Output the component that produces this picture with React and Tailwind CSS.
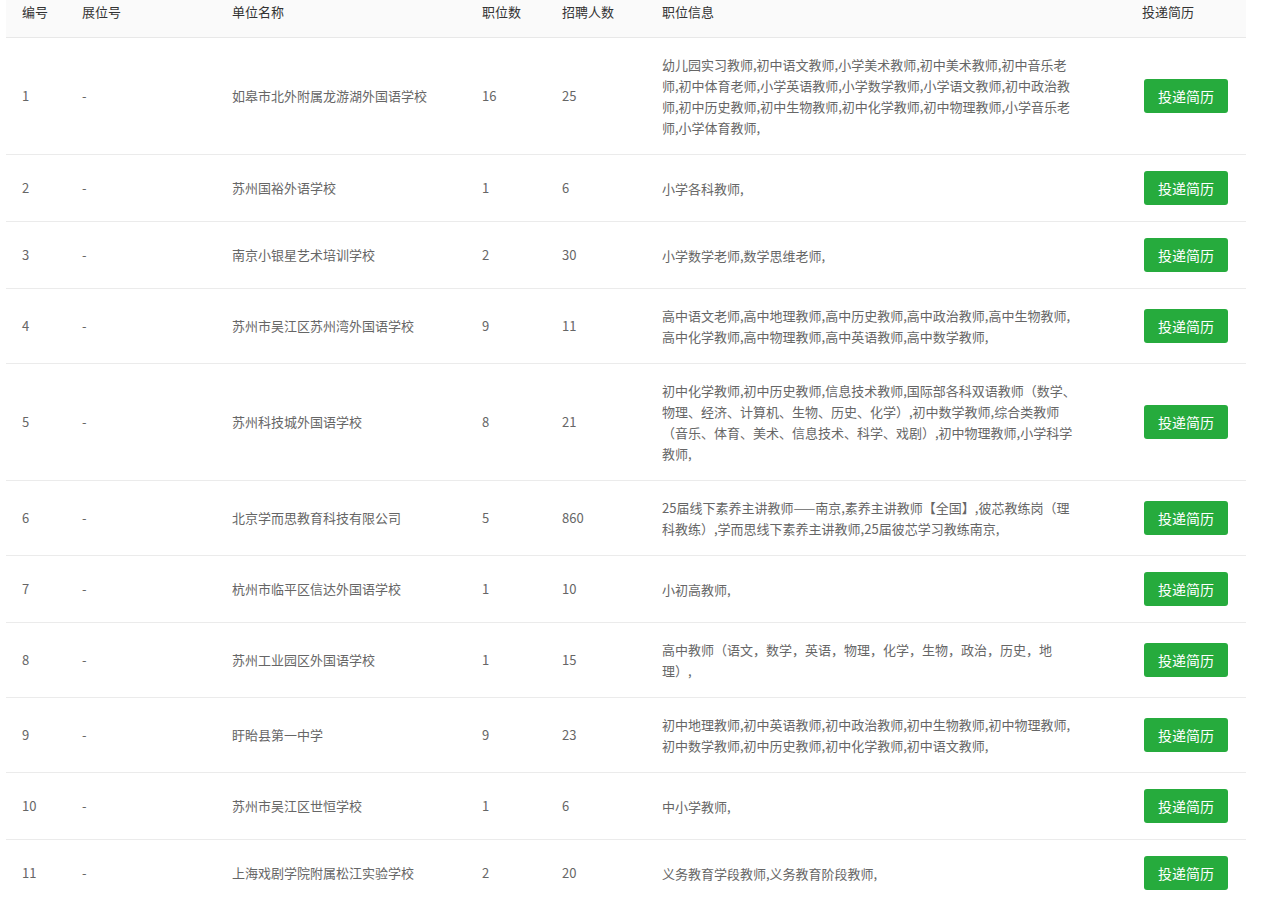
const rows = [
  ["1","如皋市北外附属龙游湖外国语学校","16","25",["幼儿园实习教师,初中语文教师,小学美术教师,初中美术教师,初中音乐老","师,初中体育老师,小学英语教师,小学数学教师,小学语文教师,初中政治教","师,初中历史教师,初中生物教师,初中化学教师,初中物理教师,小学音乐老","师,小学体育教师,"]],
  ["2","苏州国裕外语学校","1","6",["小学各科教师,"]],
  ["3","南京小银星艺术培训学校","2","30",["小学数学老师,数学思维老师,"]],
  ["4","苏州市吴江区苏州湾外国语学校","9","11",["高中语文老师,高中地理教师,高中历史教师,高中政治教师,高中生物教师,","高中化学教师,高中物理教师,高中英语教师,高中数学教师,"]],
  ["5","苏州科技城外国语学校","8","21",["初中化学教师,初中历史教师,信息技术教师,国际部各科双语教师（数学、","物理、经济、计算机、生物、历史、化学）,初中数学教师,综合类教师","（音乐、体育、美术、信息技术、科学、戏剧）,初中物理教师,小学科学","教师,"]],
  ["6","北京学而思教育科技有限公司","5","860",["25届线下素养主讲教师——南京,素养主讲教师【全国】,彼芯教练岗（理","科教练）,学而思线下素养主讲教师,25届彼芯学习教练南京,"]],
  ["7","杭州市临平区信达外国语学校","1","10",["小初高教师,"]],
  ["8","苏州工业园区外国语学校","1","15",["高中教师（语文，数学，英语，物理，化学，生物，政治，历史，地","理）,"]],
  ["9","盱眙县第一中学","9","23",["初中地理教师,初中英语教师,初中政治教师,初中生物教师,初中物理教师,","初中数学教师,初中历史教师,初中化学教师,初中语文教师,"]],
  ["10","苏州市吴江区世恒学校","1","6",["中小学教师,"]],
  ["11","上海戏剧学院附属松江实验学校","2","20",["义务教育学段教师,义务教育阶段教师,"]],
];
const cols = "grid grid-cols-[60px_150px_250px_80px_100px_480px_1fr]";
export default function App() {
  return (
    <div className="w-[1262px] h-[905px] overflow-hidden bg-white pl-[6px] pr-[16px]" style={{fontFamily:'"Noto Sans CJK SC","Noto Sans",sans-serif'}}>
      <div className={`${cols} bg-[#fafafa] border-b border-[#e8e8e8] h-[38px] text-[13px] text-[#333]`}>
        {["编号","展位号","单位名称","职位数","招聘人数","职位信息","投递简历"].map(h=>(
          <div key={h} className="pl-4 pt-[2px]">{h}</div>
        ))}
      </div>
      {rows.map(r=>(
        <div key={r[0]} className={`${cols} border-b border-[#ebebeb] text-[13px] text-[#666] items-center`}>
          <div className="pl-4">{r[0]}</div>
          <div className="pl-4">-</div>
          <div className="pl-4">{r[1]}</div>
          <div className="pl-4">{r[2]}</div>
          <div className="pl-4">{r[3]}</div>
          <div className="pl-4 py-[16px] leading-[21px]">{r[4].map((l,i)=><div key={i} className="whitespace-nowrap">{l}</div>)}</div>
          <div className="pl-[18px] py-[16px]">
            <div className="w-[84px] h-[34px] rounded-[3px] bg-[#26ab3d] text-white text-[14px] flex items-center justify-center">投递简历</div>
          </div>
        </div>
      ))}
    </div>
  );
}
